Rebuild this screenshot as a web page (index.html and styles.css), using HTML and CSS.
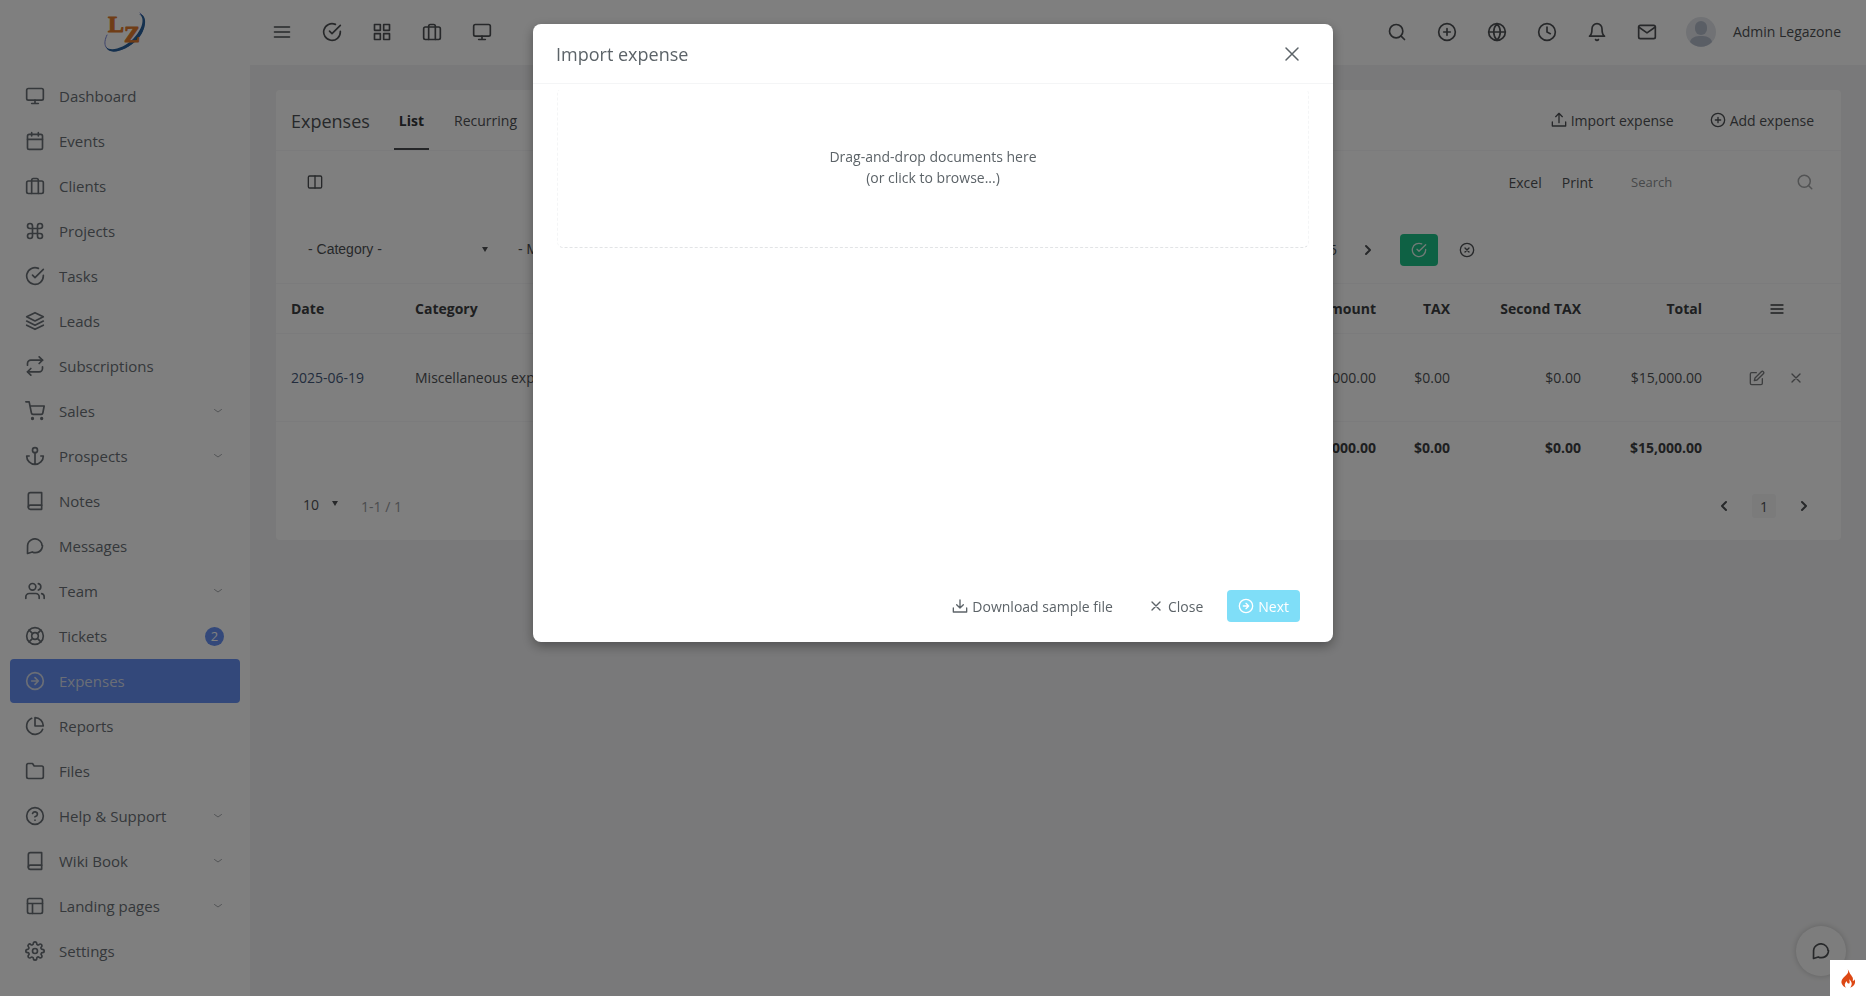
FILE: index.html
```html
<!DOCTYPE html>
<html lang="en">
<head>
<meta charset="utf-8">
<meta name="viewport" content="width=device-width, initial-scale=1">
<title>Expenses</title>
<link rel="stylesheet" href="styles.css">
</head>
<body>
<svg class="sprite" aria-hidden="true">
  <symbol id="menu" viewBox="0 0 24 24"><path d="M3 12h18M3 6h18M3 18h18"/></symbol>
  <symbol id="check-circle" viewBox="0 0 24 24"><path d="M22 11.08V12a10 10 0 1 1-5.93-9.14"/><path d="M22 4 12 14.01l-3-3"/></symbol>
  <symbol id="grid" viewBox="0 0 24 24"><path d="M3 3h7v7H3zM14 3h7v7h-7zM14 14h7v7h-7zM3 14h7v7H3z"/></symbol>
  <symbol id="briefcase" viewBox="0 0 24 24"><rect x="2" y="6" width="20" height="15" rx="2"/><path d="M8 21V5a2 2 0 0 1 2-2h4a2 2 0 0 1 2 2v16"/></symbol>
  <symbol id="monitor" viewBox="0 0 24 24"><rect x="2" y="3" width="20" height="14" rx="2"/><path d="M8 21h8M12 17v4"/></symbol>
  <symbol id="calendar" viewBox="0 0 24 24"><rect x="3" y="4" width="18" height="18" rx="2"/><path d="M16 2v4M8 2v4M3 10h18"/></symbol>
  <symbol id="command" viewBox="0 0 24 24"><path d="M18 3a3 3 0 0 0-3 3v12a3 3 0 1 0 3-3H6a3 3 0 1 0 3 3V6a3 3 0 1 0-3 3h12a3 3 0 0 0 0-6z"/></symbol>
  <symbol id="layers" viewBox="0 0 24 24"><path d="M12 2 2 7l10 5 10-5zM2 17l10 5 10-5M2 12l10 5 10-5"/></symbol>
  <symbol id="repeat" viewBox="0 0 24 24"><path d="m17 1 4 4-4 4"/><path d="M3 11V9a4 4 0 0 1 4-4h14M7 23l-4-4 4-4"/><path d="M21 13v2a4 4 0 0 1-4 4H3"/></symbol>
  <symbol id="cart" viewBox="0 0 24 24"><circle cx="9" cy="21" r="1"/><circle cx="20" cy="21" r="1"/><path d="M1 1h4l2.68 13.39a2 2 0 0 0 2 1.61h9.72a2 2 0 0 0 2-1.61L23 6H6"/></symbol>
  <symbol id="anchor" viewBox="0 0 24 24"><circle cx="12" cy="5" r="3"/><path d="M12 22V8M5 12H2a10 10 0 0 0 20 0h-3"/></symbol>
  <symbol id="book" viewBox="0 0 24 24"><path d="M4 19.5A2.5 2.5 0 0 1 6.500 17H20"/><path d="M6.500 2H20v20H6.500A2.500 2.500 0 0 1 4 19.500v-15A2.500 2.500 0 0 1 6.500 2z"/></symbol>
  <symbol id="message" viewBox="0 0 24 24"><path d="M21 11.500a8.380 8.380 0 0 1-.9 3.800 8.500 8.500 0 0 1-7.600 4.700 8.380 8.380 0 0 1-3.800-.9L3 21l.1-9.500a8.500 8.500 0 0 1 4.700-7.100 8.380 8.380 0 0 1 3.800-.9h.9a8.480 8.480 0 0 1 8 8z"/></symbol>
  <symbol id="users" viewBox="0 0 24 24"><path d="M17 21v-2a4 4 0 0 0-4-4H5a4 4 0 0 0-4 4v2"/><circle cx="9" cy="7" r="4"/><path d="M23 21v-2a4 4 0 0 0-3-3.870M16 3.130a4 4 0 0 1 0 7.750"/></symbol>
  <symbol id="life-buoy" viewBox="0 0 24 24"><circle cx="12" cy="12" r="10"/><circle cx="12" cy="12" r="4"/><path d="m4.930 4.930 4.240 4.240M14.830 14.830l4.240 4.240M14.830 9.170l4.240-4.240M4.930 19.070l4.240-4.240"/></symbol>
  <symbol id="arrow-circle" viewBox="0 0 24 24"><circle cx="12" cy="12" r="10"/><path d="m12 16 4-4-4-4M8 12h8"/></symbol>
  <symbol id="pie" viewBox="0 0 24 24"><path d="M21.210 15.890A10 10 0 1 1 8 2.830"/><path d="M22 12A10 10 0 0 0 12 2v10z"/></symbol>
  <symbol id="folder" viewBox="0 0 24 24"><path d="M22 19a2 2 0 0 1-2 2H4a2 2 0 0 1-2-2V5a2 2 0 0 1 2-2h5l2 3h9a2 2 0 0 1 2 2z"/></symbol>
  <symbol id="help" viewBox="0 0 24 24"><circle cx="12" cy="12" r="10"/><path d="M9.090 9a3 3 0 0 1 5.830 1c0 2-3 3-3 3M12 17h.01"/></symbol>
  <symbol id="layout" viewBox="0 0 24 24"><rect x="3" y="3" width="18" height="18" rx="2"/><path d="M3 9h18M9 21V9"/></symbol>
  <symbol id="settings" viewBox="0 0 24 24"><circle cx="12" cy="12" r="3"/><path d="M19.400 15a1.650 1.650 0 0 0 .33 1.820l.06.06a2 2 0 1 1-2.830 2.830l-.06-.06a1.650 1.650 0 0 0-2.800 1.170V21a2 2 0 0 1-4 0v-.09A1.650 1.650 0 0 0 9 19.400a1.650 1.650 0 0 0-1.820.33l-.06.06a2 2 0 1 1-2.830-2.830l.06-.06A1.650 1.650 0 0 0 3.180 14H3a2 2 0 0 1 0-4h.09A1.650 1.650 0 0 0 4.600 9a1.650 1.650 0 0 0-.33-1.820l-.06-.06a2 2 0 1 1 2.830-2.830l.06.06A1.650 1.650 0 0 0 9 4.600a1.650 1.650 0 0 0 1-1.510V3a2 2 0 0 1 4 0v.09a1.650 1.650 0 0 0 2.820 1.190l.06-.06a2 2 0 1 1 2.830 2.830l-.06.06A1.650 1.650 0 0 0 20.910 10H21a2 2 0 0 1 0 4h-.09a1.650 1.650 0 0 0-1.510 1z"/></symbol>
  <symbol id="search" viewBox="0 0 24 24"><circle cx="11" cy="11" r="8"/><path d="m21 21-4.350-4.350"/></symbol>
  <symbol id="plus-circle" viewBox="0 0 24 24"><circle cx="12" cy="12" r="10"/><path d="M12 8v8M8 12h8"/></symbol>
  <symbol id="globe" viewBox="0 0 24 24"><circle cx="12" cy="12" r="10"/><path d="M2 12h20M12 2a15.300 15.300 0 0 1 4 10 15.300 15.300 0 0 1-4 10 15.300 15.300 0 0 1-4-10 15.300 15.300 0 0 1 4-10z"/></symbol>
  <symbol id="clock" viewBox="0 0 24 24"><circle cx="12" cy="12" r="10"/><path d="M12 6v6l4 2"/></symbol>
  <symbol id="bell" viewBox="0 0 24 24"><path d="M18 8A6 6 0 0 0 6 8c0 7-3 9-3 9h18s-3-2-3-9M13.730 21a2 2 0 0 1-3.460 0"/></symbol>
  <symbol id="mail" viewBox="0 0 24 24"><rect x="2" y="4" width="20" height="16" rx="2"/><path d="m22 6-10 7L2 6"/></symbol>
  <symbol id="upload" viewBox="0 0 24 24"><path d="M22 15v6H2v-6M17 7l-5-5-5 5M12 2v14"/></symbol>
  <symbol id="download" viewBox="0 0 24 24"><path d="M22 15v6H2v-6M7 10l5 5 5-5M12 15V3"/></symbol>
  <symbol id="columns" viewBox="0 0 24 24"><rect x="2" y="3" width="20" height="18" rx="2"/><path d="M12 3v18"/></symbol>
  <symbol id="x" viewBox="0 0 24 24"><path d="M18 6 6 18M6 6l12 12"/></symbol>
  <symbol id="x-circle" viewBox="0 0 24 24"><circle cx="12" cy="12" r="10"/><path d="m15 9-6 6M9 9l6 6"/></symbol>
  <symbol id="edit" viewBox="0 0 24 24"><path d="M11 4H4a2 2 0 0 0-2 2v14a2 2 0 0 0 2 2h14a2 2 0 0 0 2-2v-7"/><path d="M18.500 2.500a2.120 2.120 0 0 1 3 3L12 15l-4 1 1-4z"/></symbol>
  <symbol id="chev-left" viewBox="0 0 24 24"><path d="m15 18-6-6 6-6"/></symbol>
  <symbol id="chev-right" viewBox="0 0 24 24"><path d="m9 18 6-6-6-6"/></symbol>
  <symbol id="chev-down" viewBox="0 0 24 24"><path d="m5 9 7 5 7-5"/></symbol>
  <symbol id="caret" viewBox="0 0 8 6"><path d="M1 0h6L4 5z" fill="currentColor" stroke="none"/></symbol>
</svg>

<header class="topbar">
  <a class="brand" href="#" aria-label="Legazone home">
    <svg class="logo" viewBox="0 0 44 44" aria-hidden="true">
      <path d="M37 3c7 5 5 18-4 27C22 41 7 44 3 37c-2-3-1-8 1-12" fill="none" stroke="#7a86d8" stroke-width="1"/>
      <path d="M36 4c9 0 8 16-2 26C23 41 6 46 3 37c5 5 18 1 27-8 9-9 13-21 6-25z" fill="#28619c"/>
      <text x="5" y="22">L</text>
      <text x="21" y="32">Z</text>
    </svg>
  </a>
  <nav class="tools" aria-label="Shortcuts">
    <button class="tool" aria-label="Toggle menu"><svg><use href="#menu"/></svg></button>
    <button class="tool" aria-label="To do"><svg><use href="#check-circle"/></svg></button>
    <button class="tool" aria-label="Projects"><svg><use href="#grid"/></svg></button>
    <button class="tool" aria-label="Clients"><svg><use href="#briefcase"/></svg></button>
    <button class="tool" aria-label="Dashboard"><svg><use href="#monitor"/></svg></button>
  </nav>
  <div class="tools tools-end">
    <button class="tool" aria-label="Search"><svg><use href="#search"/></svg></button>
    <button class="tool" aria-label="Quick add"><svg><use href="#plus-circle"/></svg></button>
    <button class="tool" aria-label="Language"><svg><use href="#globe"/></svg></button>
    <button class="tool" aria-label="Clock"><svg><use href="#clock"/></svg></button>
    <button class="tool" aria-label="Notifications"><svg><use href="#bell"/></svg></button>
    <button class="tool" aria-label="Inbox"><svg><use href="#mail"/></svg></button>
    <button class="user">
      <svg class="avatar" viewBox="0 0 30 30" aria-hidden="true"><circle cx="15" cy="15" r="15" fill="#e2e5ea"/><path d="M4 25c1-5 6-6 11-6s10 1 11 6a15 15 0 0 1-22 0z" fill="#b4bccb"/><rect x="9" y="4" width="12" height="14" rx="6" fill="#b4bccb"/></svg>
      <span>Admin Legazone</span>
    </button>
  </div>
</header>

<div class="shell">
  <nav class="sidebar" aria-label="Main">
    <a href="#"><svg><use href="#monitor"/></svg><span>Dashboard</span></a>
    <a href="#"><svg><use href="#calendar"/></svg><span>Events</span></a>
    <a href="#"><svg><use href="#briefcase"/></svg><span>Clients</span></a>
    <a href="#"><svg><use href="#command"/></svg><span>Projects</span></a>
    <a href="#"><svg><use href="#check-circle"/></svg><span>Tasks</span></a>
    <a href="#"><svg><use href="#layers"/></svg><span>Leads</span></a>
    <a href="#"><svg><use href="#repeat"/></svg><span>Subscriptions</span></a>
    <a href="#"><svg><use href="#cart"/></svg><span>Sales</span><svg class="chev"><use href="#chev-down"/></svg></a>
    <a href="#"><svg><use href="#anchor"/></svg><span>Prospects</span><svg class="chev"><use href="#chev-down"/></svg></a>
    <a href="#"><svg><use href="#book"/></svg><span>Notes</span></a>
    <a href="#"><svg><use href="#message"/></svg><span>Messages</span></a>
    <a href="#"><svg><use href="#users"/></svg><span>Team</span><svg class="chev"><use href="#chev-down"/></svg></a>
    <a href="#"><svg><use href="#life-buoy"/></svg><span>Tickets</span><b class="badge">2</b></a>
    <a href="#" class="active" aria-current="page"><svg><use href="#arrow-circle"/></svg><span>Expenses</span></a>
    <a href="#"><svg><use href="#pie"/></svg><span>Reports</span></a>
    <a href="#"><svg><use href="#folder"/></svg><span>Files</span></a>
    <a href="#"><svg><use href="#help"/></svg><span>Help &amp; Support</span><svg class="chev"><use href="#chev-down"/></svg></a>
    <a href="#"><svg><use href="#book"/></svg><span>Wiki Book</span><svg class="chev"><use href="#chev-down"/></svg></a>
    <a href="#"><svg><use href="#layout"/></svg><span>Landing pages</span><svg class="chev"><use href="#chev-down"/></svg></a>
    <a href="#"><svg><use href="#settings"/></svg><span>Settings</span></a>
  </nav>

  <main class="content">
    <section class="card">
      <div class="card-head">
        <h1>Expenses</h1>
        <div class="tabs">
          <a class="tab current" href="#">List</a>
          <a class="tab" href="#">Recurring</a>
        </div>
        <div class="head-actions">
          <button class="btn"><svg><use href="#upload"/></svg>Import expense</button>
          <button class="btn"><svg><use href="#plus-circle"/></svg>Add expense</button>
        </div>
      </div>

      <div class="table-tools">
        <button class="btn icon-only" aria-label="Show or hide columns"><svg><use href="#columns"/></svg></button>
        <div class="exports">
          <button class="btn">Excel</button>
          <button class="btn">Print</button>
          <div class="search">
            <input type="text" placeholder="Search" aria-label="Search expenses">
            <svg><use href="#search"/></svg>
          </div>
        </div>
      </div>

      <div class="filters">
        <div class="picker picker-wide">
          <select aria-label="Category"><option>- Category -</option></select>
          <svg><use href="#caret"/></svg>
        </div>
        <div class="picker picker-wide">
          <select aria-label="Member"><option>- Member -</option></select>
          <svg><use href="#caret"/></svg>
        </div>
        <div class="period">
          <button class="btn year">2025</button>
          <button class="btn icon-only" aria-label="Next year"><svg class="bold"><use href="#chev-right"/></svg></button>
          <button class="btn apply" aria-label="Apply filters"><svg><use href="#check-circle"/></svg></button>
          <button class="btn icon-only" aria-label="Clear filters"><svg><use href="#x-circle"/></svg></button>
        </div>
      </div>

      <table>
        <colgroup><col class="c-date"><col><col class="c-amount"><col class="c-tax"><col class="c-tax2"><col class="c-total"><col class="c-opt"></colgroup>
        <thead>
          <tr><th>Date</th><th>Category</th><th class="num">Amount</th><th class="num">TAX</th><th class="num">Second TAX</th><th class="num">Total</th><th class="opt"><svg aria-label="Options"><use href="#menu"/></svg></th></tr>
        </thead>
        <tbody>
          <tr><td><a href="#">2025-06-19</a></td><td>Miscellaneous expense</td><td class="num">$15,000.00</td><td class="num">$0.00</td><td class="num">$0.00</td><td class="num">$15,000.00</td>
          <td class="opt"><div class="row-actions"><button aria-label="Edit"><svg><use href="#edit"/></svg></button><button aria-label="Delete"><svg><use href="#x"/></svg></button></div></td></tr>
        </tbody>
        <tfoot>
          <tr><td></td><td></td><td class="num">$15,000.00</td><td class="num">$0.00</td><td class="num">$0.00</td><td class="num">$15,000.00</td><td></td></tr>
        </tfoot>
      </table>

      <div class="pager">
        <div class="picker picker-size">
          <select aria-label="Rows per page"><option>10</option></select>
          <svg><use href="#caret"/></svg>
        </div>
        <span class="range">1-1 / 1</span>
        <div class="pages">
          <button aria-label="Previous page"><svg class="bold"><use href="#chev-left"/></svg></button>
          <button class="page">1</button>
          <button aria-label="Next page"><svg class="bold"><use href="#chev-right"/></svg></button>
        </div>
      </div>
    </section>
  </main>
</div>

<button class="chat" aria-label="Chat"><svg><use href="#message"/></svg></button>

<div class="backdrop">
  <div class="modal" role="dialog" aria-modal="true" aria-labelledby="modal-title">
    <div class="modal-head">
      <h2 id="modal-title">Import expense</h2>
      <button class="modal-x" aria-label="Close dialog"><svg><use href="#x"/></svg></button>
    </div>
    <div class="modal-body">
      <button class="dropzone">Drag-and-drop documents here<br>(or click to browse...)</button>
    </div>
    <div class="modal-foot">
      <button class="btn"><svg><use href="#download"/></svg>Download sample file</button>
      <button class="btn"><svg><use href="#x"/></svg>Close</button>
      <button class="btn next" disabled><svg><use href="#arrow-circle"/></svg>Next</button>
    </div>
  </div>
</div>

<button class="debug" aria-label="Debug toolbar">
  <svg viewBox="0 0 20 24" aria-hidden="true"><path d="M9 1c2 4-1 6-3 8-3 3-5 5-4 9 1 3 3 4 5 5-2-3-2-5 1-8 0 2 1 3 3 3 1-2 0-3 0-5 3 3 4 6 1 10 5-2 7-6 5-10 0 1-1 2-2 2 1-4-1-5-2-7-2-2-2-5-4-7z" fill="#dd4814"/></svg>
</button>
</body>
</html>
```
FILE: styles.css
```css
* { box-sizing: border-box; }

body {
  margin: 0;
  min-height: 100vh;
  display: flex;
  flex-direction: column;
  background: #f3f3f4;
  color: #4e5154;
  font: 14px/21px "Open Sans", "Noto Sans", sans-serif;
}

h1, h2 { margin: 0; font-weight: 400; font-size: 18px; line-height: 24px; }
a { color: inherit; text-decoration: none; }
button, input, select { font: inherit; color: inherit; background: none; border: 0; margin: 0; padding: 0; }
button { cursor: pointer; }

svg {
  width: 16px;
  height: 16px;
  flex: none;
  fill: none;
  stroke: currentColor;
  stroke-width: 2;
  stroke-linecap: round;
  stroke-linejoin: round;
}
.sprite { display: none; }
svg.bold { stroke-width: 3; }

/* Top bar */
.topbar {
  display: flex;
  align-items: center;
  height: 65px;
  padding: 0 25px 2px 0;
  background: #fff;
}
.brand { width: 249px; display: flex; justify-content: center; }
.logo { width: 44px; height: 44px; stroke: none; overflow: visible; }
.logo text {
  font-family: "Liberation Serif", serif;
  font-size: 24px;
  font-weight: 700;
  fill: #e07a2c;
  stroke: #e07a2c;
  stroke-width: 1;
}
.tools { display: flex; align-items: center; padding-left: 8px; }
.tools-end { margin-left: auto; }
.tool { width: 50px; height: 50px; display: grid; place-items: center; }
.tool svg { width: 20px; height: 20px; }
.user { display: flex; align-items: center; gap: 17px; margin-left: 14px; }
.user .avatar { width: 30px; height: 30px; stroke: none; }

/* Sidebar */
.shell { flex: 1; display: flex; }
.sidebar {
  width: 250px;
  flex: none;
  display: flex;
  flex-direction: column;
  gap: 1px;
  padding: 9px 10px;
  background: #fff;
  font-size: 15px;
  color: #6a7076;
}
.sidebar a {
  display: flex;
  align-items: center;
  gap: 14px;
  height: 44px;
  padding: 0 16px 0 15px;
  border-radius: 4px;
}
.sidebar svg { width: 20px; height: 20px; }
.sidebar .chev { width: 12px; height: 12px; margin-left: auto; opacity: .6; }
.sidebar .active { background: #6690f4; color: #d5dcec; }
.badge {
  width: 19px;
  margin-left: auto;
  border-radius: 10px;
  background: #6690f4;
  color: #fff;
  font-weight: 400;
  font-size: 13px;
  line-height: 19px;
  text-align: center;
}

/* Card */
.content { flex: 1; min-width: 0; padding: 25px 25px 25px 26px; }
.card { background: #fff; border-radius: 4px; }
.card-head {
  display: flex;
  align-items: stretch;
  min-height: 61px;
  padding: 0 16px 0 15px;
  border-bottom: 1px solid #f7f7f8;
}
.card-head h1 { align-self: center; padding-top: 2px; }
.tabs { display: flex; margin-left: 24px; gap: 20px; }
.tab { display: flex; align-items: center; padding: 2px 5px 0; border-bottom: 2px solid transparent; }
.tab.current { font-weight: 700; color: #33363a; border-color: #4a4d50; }
.head-actions { display: flex; align-items: center; margin-left: auto; gap: 14px; }

.btn {
  display: inline-flex;
  align-items: center;
  justify-content: center;
  gap: 4px;
  height: 32px;
  padding: 0 11px;
  border-radius: 4px;
}
.table-tools, .filters { display: flex; align-items: center; padding: 0 16px 0 15px; }
.table-tools { min-height: 62px; padding-left: 20px; justify-content: space-between; }
.exports { display: flex; align-items: center; }
.exports .btn { padding: 0 10px; }
.search { display: flex; align-items: center; width: 208px; height: 32px; margin-left: 14px; padding: 0 11px 0 14px; font-size: 13px; }
.search input { flex: 1; min-width: 0; outline: 0; }
.search input::placeholder { color: #8e9194; opacity: 1; }
.search svg { width: 18px; height: 18px; opacity: .5; }

.picker { display: grid; align-items: center; }
.picker > * { grid-area: 1 / 1; }
.picker select { width: 100%; height: 32px; appearance: none; outline: 0; font-size: 14px; }
.picker svg { width: 8px; height: 6px; justify-self: end; pointer-events: none; }
.filters { min-height: 70px; padding-top: 3px; gap: 10px; }
.picker-wide { width: 200px; padding: 0 2px 0 17px; }
.picker-wide select { font-family: "Liberation Sans", Arial, sans-serif; }
.period { display: flex; align-items: center; margin: 0 339px 0 auto; }
.year { padding-right: 12px; }
.apply { width: 38px; margin: 0 10px 0 13px; background: #1cc388; color: #e4f5ee; }

/* Table */
table { width: 100%; border-collapse: collapse; table-layout: fixed; }
.c-date { width: 124px; }
.c-amount { width: 140px; }
.c-tax { width: 74px; }
.c-tax2 { width: 131px; }
.c-total { width: 121px; }
.c-opt { width: 124px; }
th, td { padding: 0 15px; text-align: left; }
th { height: 50px; color: #3c3f42; border: solid #f7f7f8; border-width: 1px 0; }
tbody td { height: 88px; border-bottom: 1px solid #f7f7f8; }
tbody a { color: #45597a; }
tfoot td { height: 51px; font-weight: 700; color: #3c3f42; }
.num { text-align: right; }
.opt { padding: 0 20px 0 15px; text-align: center; }
.opt svg { display: block; margin: 0 auto; }
.row-actions { display: flex; justify-content: center; gap: 23px; opacity: .75; }

/* Pager */
.pager { display: flex; align-items: center; min-height: 67px; padding: 0 25px 0 27px; }
.picker-size { width: 36px; padding-bottom: 4px; }
.range { margin-left: 22px; color: #96999c; }
.pages { display: flex; align-items: center; gap: 16px; margin-left: auto; }
.pages button { width: 24px; height: 24px; display: grid; place-items: center; }
.pages .page { background: #f6f6f7; border-radius: 3px; }

/* Overlays */
.chat {
  position: fixed;
  right: 20px;
  bottom: 20px;
  width: 50px;
  height: 50px;
  display: grid;
  place-items: center;
  border-radius: 50%;
  background: #fbfbfb;
  box-shadow: 0 0 6px rgba(0, 0, 0, .2);
}
.chat svg { width: 20px; height: 20px; }
.backdrop {
  position: fixed;
  inset: 0;
  display: flex;
  justify-content: center;
  align-items: flex-start;
  padding: 24px;
  background: rgba(0, 0, 0, .5);
}
.modal {
  width: 800px;
  max-width: 100%;
  border-radius: 8px;
  background: #fff;
  color: #5c6368;
  box-shadow: 0 4px 12px rgba(0, 0, 0, .35);
}
.modal-head {
  display: flex;
  align-items: center;
  justify-content: space-between;
  min-height: 60px;
  padding: 0 29px 0 23px;
  border-bottom: 1px solid #f4f5f6;
}
.modal-x { display: grid; }
.modal-x svg { width: 24px; height: 24px; stroke-width: 1.5; }
.modal-body { min-height: 491px; padding: 4px 24px; }
.dropzone {
  display: block;
  width: 100%;
  min-height: 160px;
  padding-bottom: 2px;
  border: 1px dashed #f4f5f6;
  border-top-color: transparent;
  border-bottom-color: #e2e4e6;
  border-radius: 6px;
}
.modal-foot { display: flex; justify-content: flex-end; gap: 13px; padding: 15px 33px 20px; }
.modal-foot .next { background: #7fdef8; color: #fff; }
.debug {
  position: fixed;
  right: 0;
  bottom: 0;
  width: 36px;
  height: 36px;
  display: grid;
  place-items: center;
  background: #fff;
}
.debug svg { width: 17px; height: 21px; stroke: none; }
```
